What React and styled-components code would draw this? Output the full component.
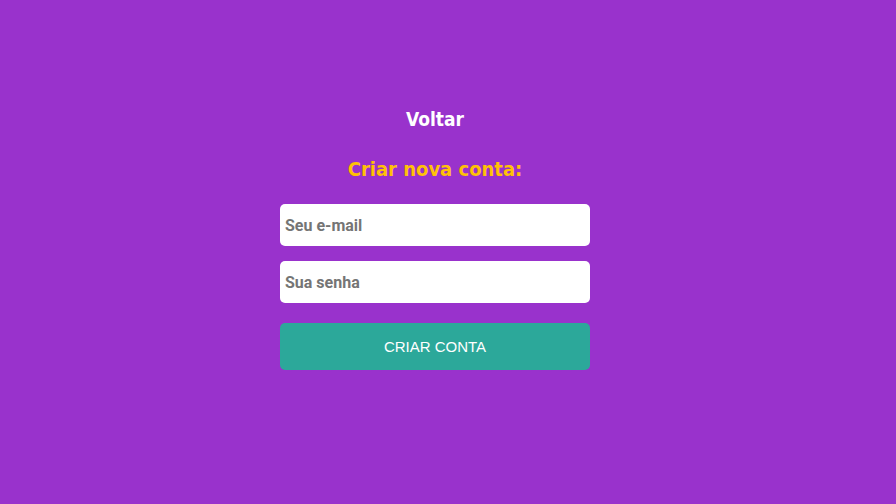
import React from "react";
import styled, { createGlobalStyle } from "styled-components";

const Global = createGlobalStyle`
  html, body { margin: 0; padding: 0; }
  body { background: #9932cc; font-family: "Liberation Sans", Arial, sans-serif; }
  * { box-sizing: border-box; }
`;

const Page = styled.div`
  width: 896px;
  height: 504px;
  display: flex;
  justify-content: center;
  padding: 105px 26px 0 0;
`;

const Form = styled.form`
  width: 310px;
  display: flex;
  flex-direction: column;
  align-items: stretch;
`;

const Back = styled.a`
  align-self: center;
  color: #ffffff;
  font-family: "DejaVu Sans Condensed", "DejaVu Sans", sans-serif;
  font-stretch: condensed;
  font-weight: 700;
  font-size: 19px;
  line-height: 28px;
  text-decoration: none;
  cursor: pointer;
`;

const Title = styled.h2`
  margin: 22px 0 21px;
  text-align: center;
  color: #ffc107;
  font-family: "DejaVu Sans Condensed", "DejaVu Sans", sans-serif;
  font-stretch: condensed;
  font-weight: 700;
  font-size: 20px;
  line-height: 28px;
`;

const Input = styled.input`
  height: 42px;
  width: 100%;
  border: none;
  border-radius: 5px;
  background: #fff;
  padding: 0 5px;
  margin-bottom: ${p => p.$mb || 15}px;
  font-family: Roboto, "Liberation Sans", sans-serif;
  font-weight: 700;
  font-size: 16px;
  color: #333;
  outline: none;
  &::placeholder { color: #757575; opacity: 1; }
`;

const Button = styled.button`
  height: 47px;
  width: 100%;
  border: none;
  border-radius: 5px;
  background: #2ca89a;
  color: #fff;
  font-family: "Liberation Sans", Arial, sans-serif;
  font-size: 15px;
  cursor: pointer;
`;

export default function App() {
  return (
    <>
      <Global />
      <Page>
        <Form onSubmit={e => e.preventDefault()}>
          <Back>Voltar</Back>
          <Title>Criar nova conta:</Title>
          <Input type="email" placeholder="Seu e-mail" />
          <Input type="password" placeholder="Sua senha" $mb={20} />
          <Button type="submit">CRIAR CONTA</Button>
        </Form>
      </Page>
    </>
  );
}
